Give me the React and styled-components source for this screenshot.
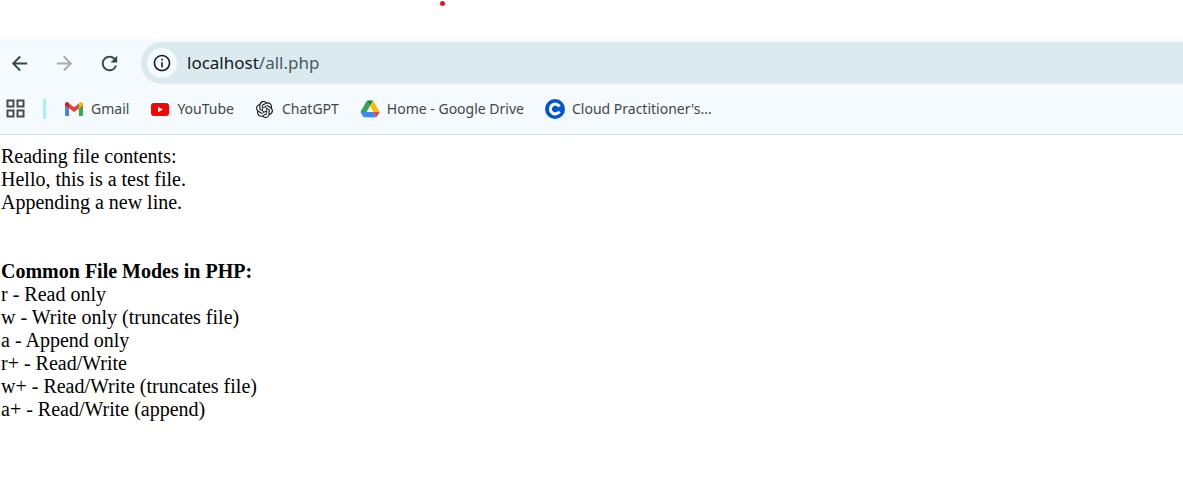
import React from "react";
import styled, { createGlobalStyle } from "styled-components";
import { MdArrowBack, MdArrowForward, MdRefresh, MdInfoOutline } from "react-icons/md";
import { SiOpenai } from "react-icons/si";

const GlobalStyle = createGlobalStyle`
  * { box-sizing: border-box; }
  body { margin: 0; background: #fff; }
`;

const TopStrip = styled.div`
  height: 39px;
  padding: 1px 0 0 440px;
`;

const Marker = styled.div`
  width: 5px;
  height: 5px;
  border-radius: 50%;
  background: #e8141c;
`;

const Chrome = styled.header`
  background: #f4fafd;
  border-bottom: 1px solid #d5e3e6;
  font-family: "Noto Sans", "Open Sans", sans-serif;
`;

const Toolbar = styled.div`
  display: flex;
  align-items: center;
  padding-top: 3px;
`;

const NavButtons = styled.nav`
  display: flex;
  gap: 21px;
  padding: 0 20px 0 7px;
`;

const IconButton = styled.button`
  display: flex;
  align-items: center;
  justify-content: center;
  width: 24px;
  height: 24px;
  padding: 0;
  border: 0;
  background: none;
  color: ${(p) => p.$color || "#33474c"};
`;

const AddressBar = styled.div`
  display: flex;
  flex: 1;
  align-items: center;
  gap: 10px;
  height: 42px;
  padding-left: 6px;
  border-radius: 21px 0 0 21px;
  background: #dbeaef;
`;

const SiteInfo = styled(IconButton)`
  width: 30px;
  height: 30px;
  border-radius: 50%;
  background: #f4fafd;
`;

const Address = styled.a`
  color: #4d5a5f;
  font-size: 17px;
  line-height: 24px;
  text-decoration: none;
`;

const Host = styled.span`
  color: #14191b;
`;

const Bookmarks = styled.nav`
  display: flex;
  align-items: center;
  height: 50px;
  padding-left: 4px;
`;

const Divider = styled.span`
  width: 3px;
  height: 20px;
  margin: 0 18px 0 15px;
  background: #a4f0ff;
`;

const BookmarkList = styled.div`
  display: flex;
  gap: 21px;
`;

const Bookmark = styled.a`
  display: flex;
  align-items: center;
  gap: 7px;
  color: #40484b;
  font-size: 14px;
  line-height: 20px;
  white-space: nowrap;
  text-decoration: none;
`;

const BookmarkIcon = styled.span`
  display: flex;
  align-items: center;
  justify-content: center;
  width: 20px;
  height: 20px;
`;

const Page = styled.main`
  padding: 10px 1px;
  color: #000;
  font-family: "Liberation Serif", serif;
  font-size: 20px;
  line-height: 23px;
`;

const Line = styled.p`
  margin: 0;
`;

const Heading = styled.h1`
  margin: 46px 0 0;
  font-size: 20px;
  line-height: 23px;
`;

const AppsIcon = () => (
  <svg width="24" height="24" viewBox="0 0 24 24" fill="none" stroke="#474c4e" strokeWidth="2">
    <path d="M3.500 3.500h6v6h-6zM13.500 3.500h6v6h-6zM3.500 13.500h6v6h-6zM13.500 13.500h6v6h-6z" />
  </svg>
);

const GmailIcon = () => (
  <svg width="20" height="20" viewBox="0 0 20 20">
    <path fill="#4285f4" d="M1 5v10.500c0 .8.600 1.500 1.400 1.500H5V8z" />
    <path fill="#34a853" d="M15 8v9h2.600c.8 0 1.400-.700 1.400-1.500V5z" />
    <path fill="#ea4335" d="M5 4.500l5 3.800 5-3.800v4.800l-5 3.800-5-3.800z" />
    <path fill="#c5221f" d="M1 5.200c0-2 2.200-2.700 3.400-1.800L5 4.500v4.800L1 6.300z" />
    <path fill="#fbbc04" d="M19 5.200c0-2-2.200-2.700-3.400-1.800L15 4.500v4.800l4-3z" />
  </svg>
);

const YouTubeIcon = () => (
  <svg width="20" height="20" viewBox="0 0 20 20">
    <rect x="1" y="4" width="18" height="13" rx="3" fill="#f00" />
    <path d="M8 7.700v5.600l5-2.800z" fill="#fff" />
  </svg>
);

const DriveIcon = () => (
  <svg width="20" height="20" viewBox="-3 -3 93 93">
    <g transform="translate(0 4)">
      <path fill="#34a853" d="M43.650 25L29.900 1.200c-1.350.8-2.500 1.900-3.300 3.300L1.200 48.500C.4 49.900 0 51.450 0 53h27.500z" />
      <path fill="#ea4335" d="M73.550 76.800c1.350-.8 2.500-1.900 3.300-3.300l9.250-16c.8-1.400 1.200-2.950 1.200-4.500H59.800z" />
      <path fill="#188038" d="M43.650 25L57.400 1.200C56.050.4 54.500 0 52.900 0H34.400c-1.600 0-3.150.45-4.500 1.200z" />
      <path fill="#4285f4" d="M59.800 53H0c0 1.550.4 3.100 1.200 4.500l9.250 16c.8 1.400 1.950 2.500 3.300 3.300 1.350.8 2.900 1.200 4.500 1.200h50.800c1.600 0 3.150-.45 4.500-1.200z" />
      <path fill="#fbbc04" d="M73.400 26.500L60.700 4.500c-.8-1.400-1.950-2.500-3.300-3.300L43.650 25l16.150 28h27.450c0-1.550-.4-3.100-1.200-4.500z" />
    </g>
  </svg>
);

const CourseraIcon = () => (
  <svg width="20" height="20" viewBox="0 0 20 20">
    <circle cx="10" cy="10" r="10" fill="#0056d2" />
    <path d="M14.500 7.500a4.900 4.900 0 1 0 0 5" fill="none" stroke="#fff" strokeWidth="3" />
  </svg>
);

const bookmarks = [
  { label: "Gmail", icon: <GmailIcon /> },
  { label: "YouTube", icon: <YouTubeIcon /> },
  { label: "ChatGPT", icon: <SiOpenai size={17} color="#111" /> },
  { label: "Home - Google Drive", icon: <DriveIcon /> },
  { label: "Cloud Practitioner's...", icon: <CourseraIcon /> },
];

const intro = ["Reading file contents:", "Hello, this is a test file.", "Appending a new line."];

const modes = [
  "r - Read only",
  "w - Write only (truncates file)",
  "a - Append only",
  "r+ - Read/Write",
  "w+ - Read/Write (truncates file)",
  "a+ - Read/Write (append)",
];

export default function App() {
  return (
    <>
      <GlobalStyle />
      <TopStrip>
        <Marker />
      </TopStrip>
      <Chrome>
        <Toolbar>
          <NavButtons>
            <IconButton aria-label="Back"><MdArrowBack size={23} /></IconButton>
            <IconButton aria-label="Forward" $color="#a5abae"><MdArrowForward size={23} /></IconButton>
            <IconButton aria-label="Reload"><MdRefresh size={23} /></IconButton>
          </NavButtons>
          <AddressBar>
            <SiteInfo aria-label="Site information" $color="#1c2224"><MdInfoOutline size={20} /></SiteInfo>
            <Address href="#"><Host>localhost</Host>/all.php</Address>
          </AddressBar>
        </Toolbar>
        <Bookmarks>
          <IconButton aria-label="Apps"><AppsIcon /></IconButton>
          <Divider />
          <BookmarkList>
            {bookmarks.map((b) => (
              <Bookmark key={b.label} href="#">
                <BookmarkIcon>{b.icon}</BookmarkIcon>
                {b.label}
              </Bookmark>
            ))}
          </BookmarkList>
        </Bookmarks>
      </Chrome>
      <Page>
        {intro.map((t) => <Line key={t}>{t}</Line>)}
        <Heading>Common File Modes in PHP:</Heading>
        {modes.map((t) => <Line key={t}>{t}</Line>)}
      </Page>
    </>
  );
}
